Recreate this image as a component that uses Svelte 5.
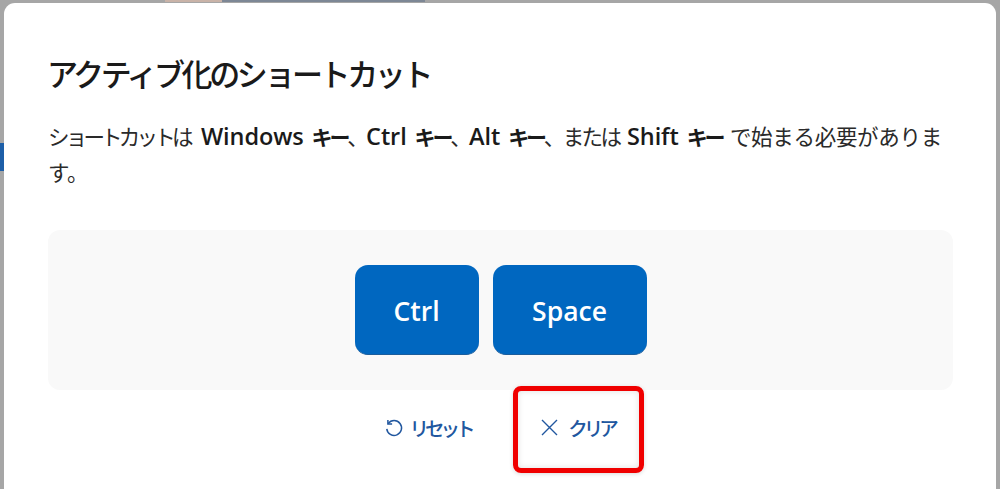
<script>
  const keys = ['Ctrl', 'Space'];
</script>

<div class="page">
  <div class="edge"></div>
  <div class="topstrip"></div>
  <section class="dialog">
    <h1>アクティブ化のショートカット</h1>
    <p class="desc"><span class="kata">ショートカット</span>は <b>Windows <i>キー</i></b><span class="mid">、</span><b>Ctrl <i>キー</i></b><span class="mid">、</span><b>Alt <i>キー</i></b><span class="mid">、または</span> <b>Shift <i>キー</i></b> <span class="tail">で始まる必要があります。</span></p>
    <div class="panel">
      {#each keys as k}
        <div class="key">{k}</div>
      {/each}
    </div>
    <div class="actions">
      <button class="act reset">
        <svg width="20" height="20" viewBox="0 0 20 20" fill="none" stroke="currentColor" stroke-width="1.5">
          <path d="M4.2 5.6A7.4 7.4 0 1 1 2.8 10.8" />
          <path d="M3.9 1.9V6h4.2" />
        </svg>
        <span>リセット</span>
      </button>
      <button class="act clear">
        <svg width="17" height="17" viewBox="0 0 17 17" fill="none" stroke="currentColor" stroke-width="1.4">
          <path d="M1 1l15 15M16 1L1 16" />
        </svg>
        <span>クリア</span>
      </button>
    </div>
  </section>
</div>

<style>
  :global(body) {
    margin: 0;
    background: #a6a6a6;
    overflow: hidden;
  }
  .page {
    width: 1000px;
    height: 489px;
    display: flex;
    padding: 3px 4px 0 4px;
    box-sizing: border-box;
    overflow: hidden;
    position: relative;
  }
  .edge {
    position: absolute;
    left: 0;
    top: 143px;
    width: 4px;
    height: 28px;
    background: #1d5fa8;
  }
  .topstrip {
    position: absolute;
    left: 165px;
    top: 0;
    width: 260px;
    height: 2px;
    background: linear-gradient(90deg, #c9b3a8 0 22%, #7d8795 22% 100%);
  }
  .dialog {
    flex: 1;
    background: #fff;
    border-radius: 11px 11px 0 0;
    padding: 0 43px 0 44px;
    font-family: "Open Sans", "Noto Sans CJK JP", sans-serif;
    color: #1b1b1b;
    position: relative;
  }
  h1 {
    margin: 49px 0 0 -1px;
    font-family: "Noto Sans CJK JP", sans-serif;
    font-size: 31px;
    font-weight: 500;
    line-height: 42px;
    letter-spacing: -3.4px;
    color: #1a1a1a;
  }
  .desc {
    margin: 24px 0 0;
    font-family: "Open Sans", "Noto Sans CJK JP", sans-serif;
    font-size: 21.5px;
    line-height: 36px;
    word-spacing: 2px;
    color: #2a2a2a;
  }
  .kata {
    letter-spacing: -3.8px;
  }
  .desc b {
    font-size: 23.5px;
    font-weight: 600;
    letter-spacing: -0.1px;
    color: #1a1a1a;
  }
  .desc i {
    font-style: normal;
    font-size: 21px;
    letter-spacing: -3.2px;
  }
  .mid {
    letter-spacing: -2.6px;
  }
  .tail {
    letter-spacing: -0.3px;
  }
  .panel {
    margin-top: 39px;
    height: 160px;
    background: #f9f9f9;
    border-radius: 12px;
    display: flex;
    justify-content: center;
    align-items: center;
    gap: 14px;
  }
  .key {
    height: 90px;
    box-sizing: border-box;
    background: #0067c0;
    border-radius: 13px;
    border-bottom: 1px solid #1b5d9c;
    color: #fff;
    font-size: 26.5px;
    font-weight: 600;
    padding-top: 2px;
    display: flex;
    align-items: center;
    justify-content: center;
  }
  .key:first-child {
    width: 124px;
  }
  .key:last-child {
    width: 154px;
  }
  .actions {
    display: flex;
    justify-content: center;
    gap: 36px;
    margin-top: -4px;
    margin-left: 22px;
  }
  .act {
    display: flex;
    align-items: center;
    background: none;
    border: 5px solid transparent;
    color: #21579f;
    font-family: "Noto Sans CJK JP", sans-serif;
    font-size: 19.5px;
    font-weight: 500;
    letter-spacing: -4px;
    padding: 0 0 4px;
    height: 87px;
    box-sizing: border-box;
  }
  .reset {
    gap: 5px;
  }
  .clear {
    width: 131px;
    gap: 10px;
    justify-content: center;
    border-color: #f00000;
    border-radius: 8px;
    box-shadow: inset 0 0 6px rgba(0, 0, 0, 0.12), 0 1px 4px rgba(0, 0, 0, 0.15);
  }
</style>
